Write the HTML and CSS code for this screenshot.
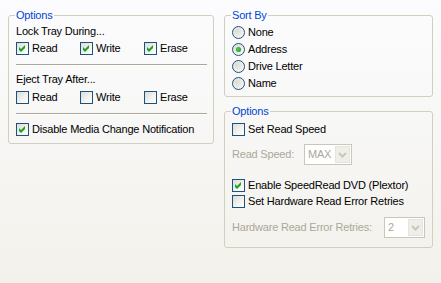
FILE: index.html
```html
<!doctype html>
<html lang="en">
<head>
    <meta charset="UTF-8">
    <title>Drive Options</title>
    <link rel="stylesheet" href="styles.css">
</head>
<body>
<div class="page">

    <fieldset class="group group-left">
        <legend>Options</legend>
        <div class="caption">Lock Tray During...</div>
        <div class="checks">
            <label class="check"><span class="box"><svg class="tick" viewBox="0 0 11 11"><path d="M2 4 4 6 8 2v3L4 9 2 7z"/></svg></span>Read</label>
            <label class="check"><span class="box"><svg class="tick" viewBox="0 0 11 11"><path d="M2 4 4 6 8 2v3L4 9 2 7z"/></svg></span>Write</label>
            <label class="check"><span class="box"><svg class="tick" viewBox="0 0 11 11"><path d="M2 4 4 6 8 2v3L4 9 2 7z"/></svg></span>Erase</label>
        </div>
        <div class="sep"></div>
        <div class="caption">Eject Tray After...</div>
        <div class="checks checks-second">
            <label class="check"><span class="box"></span>Read</label>
            <label class="check"><span class="box"></span>Write</label>
            <label class="check"><span class="box"></span>Erase</label>
        </div>
        <div class="sep sep-second"></div>
        <label class="check"><span class="box"><svg class="tick" viewBox="0 0 11 11"><path d="M2 4 4 6 8 2v3L4 9 2 7z"/></svg></span>Disable Media Change Notification</label>
    </fieldset>

    <div class="column">
        <fieldset class="group group-sort">
            <legend>Sort By</legend>
            <div class="radios">
                <label class="radio"><span class="dot"></span>None</label>
                <label class="radio"><span class="dot on"></span>Address</label>
                <label class="radio"><span class="dot"></span>Drive Letter</label>
                <label class="radio"><span class="dot"></span>Name</label>
            </div>
        </fieldset>

        <fieldset class="group group-options">
            <legend>Options</legend>
            <label class="check"><span class="box"></span>Set Read Speed</label>
            <div class="field field-speed">
                <span class="field-label label-speed">Read Speed:</span>
                <span class="combo combo-speed">
                    <span class="combo-value">MAX</span>
                    <span class="combo-btn"><svg viewBox="0 0 9 6"><path d="M1 1 4.5 4.5 8 1" /></svg></span>
                </span>
            </div>
            <div class="stack">
                <label class="check"><span class="box"><svg class="tick" viewBox="0 0 11 11"><path d="M2 4 4 6 8 2v3L4 9 2 7z"/></svg></span>Enable SpeedRead DVD (Plextor)</label>
                <label class="check"><span class="box"></span>Set Hardware Read Error Retries</label>
            </div>
            <div class="field field-retries">
                <span class="field-label label-retries">Hardware Read Error Retries:</span>
                <span class="combo combo-retries">
                    <span class="combo-value">2</span>
                    <span class="combo-btn"><svg viewBox="0 0 9 6"><path d="M1 1 4.5 4.5 8 1" /></svg></span>
                </span>
            </div>
        </fieldset>
    </div>

</div>
</body>
</html>
```

FILE: styles.css
```css
html, body {
    margin: 0;
    height: 100%;
}

body {
    background: linear-gradient(#fcfcfe, #f2f1eb);
    font-family: "Liberation Sans", Arial, sans-serif;
    font-size: 11px;
    line-height: 13px;
    letter-spacing: -0.2px;
    color: #000;
}

.page {
    display: flex;
    align-items: flex-start;
    gap: 10px;
    padding: 9px 0 0 8px;
}

.group {
    margin: 0;
    min-width: 0;
    border: 1px solid #d0d0bf;
    border-radius: 3px;
    padding: 3px 6px 7px 7px;
    box-sizing: border-box;
}

.group legend {
    color: #0046d5;
    padding: 0 1px;
    margin-left: -1px;
    line-height: 13px;
}

.group-left {
    width: 206px;
}

.column {
    display: flex;
    flex-direction: column;
    gap: 8px;
    width: 209px;
}

.caption {
    height: 13px;
}

.checks {
    display: grid;
    grid-template-columns: 64px 64px 64px;
    margin-top: 4px;
}

.checks-second {
    margin-top: 5px;
}

.check {
    display: flex;
    align-items: center;
    gap: 3px;
    height: 13px;
    white-space: nowrap;
}

.box {
    flex: none;
    width: 13px;
    height: 13px;
    box-sizing: border-box;
    border: 1px solid #1c5180;
    background: linear-gradient(135deg, #dcdcd7 0%, #f4f4f0 60%, #ffffff 100%);
    display: flex;
    align-items: center;
    justify-content: center;
}

.tick {
    width: 11px;
    height: 11px;
    fill: #21a121;
}

.sep {
    height: 1px;
    background: #aca899;
    border-bottom: 1px solid #ffffff;
    margin: 9px 0 7px 0;
}

.sep-second {
    margin: 9px 0 8px 0;
}

.group-sort {
    padding: 4px 6px 6px 7px;
}

.radios {
    display: flex;
    flex-direction: column;
    gap: 4px;
}

.radio {
    display: flex;
    align-items: center;
    gap: 3px;
    height: 13px;
}

.dot {
    flex: none;
    width: 13px;
    height: 13px;
    box-sizing: border-box;
    border: 1px solid #1c5180;
    border-radius: 50%;
    background: radial-gradient(circle at 35% 35%, #dcdcd7 0%, #ececE6 50%, #ffffff 100%);
    display: flex;
    align-items: center;
    justify-content: center;
}

.dot.on::after {
    content: "";
    width: 5px;
    height: 5px;
    border-radius: 50%;
    background: radial-gradient(circle at 40% 40%, #55d151 0%, #21a121 70%, #1a8a1a 100%);
}

.group-options {
    padding: 5px 6px 9px 7px;
}

.field {
    display: flex;
    align-items: center;
    color: #aca899;
}

.field-speed {
    margin-top: 8px;
}

.field-retries {
    margin-top: 9px;
}

.label-speed {
    width: 72px;
}

.label-retries {
    width: 152px;
}

.combo {
    display: flex;
    height: 21px;
    box-sizing: border-box;
    border: 1px solid #c9c7ba;
    background: #ffffff;
}

.combo-speed {
    width: 48px;
}

.combo-retries {
    width: 41px;
}

.combo-value {
    flex: 1;
    padding-left: 3px;
    line-height: 19px;
}

.combo-btn {
    width: 15px;
    margin: 1px;
    box-sizing: border-box;
    border: 1px solid #e6e4db;
    background: #efeee8;
    display: flex;
    align-items: center;
    justify-content: center;
}

.combo-btn svg {
    width: 9px;
    height: 6px;
    fill: none;
    stroke: #c9c7ba;
    stroke-width: 2;
}

.stack {
    display: flex;
    flex-direction: column;
    gap: 3px;
    margin-top: 14px;
}
```
